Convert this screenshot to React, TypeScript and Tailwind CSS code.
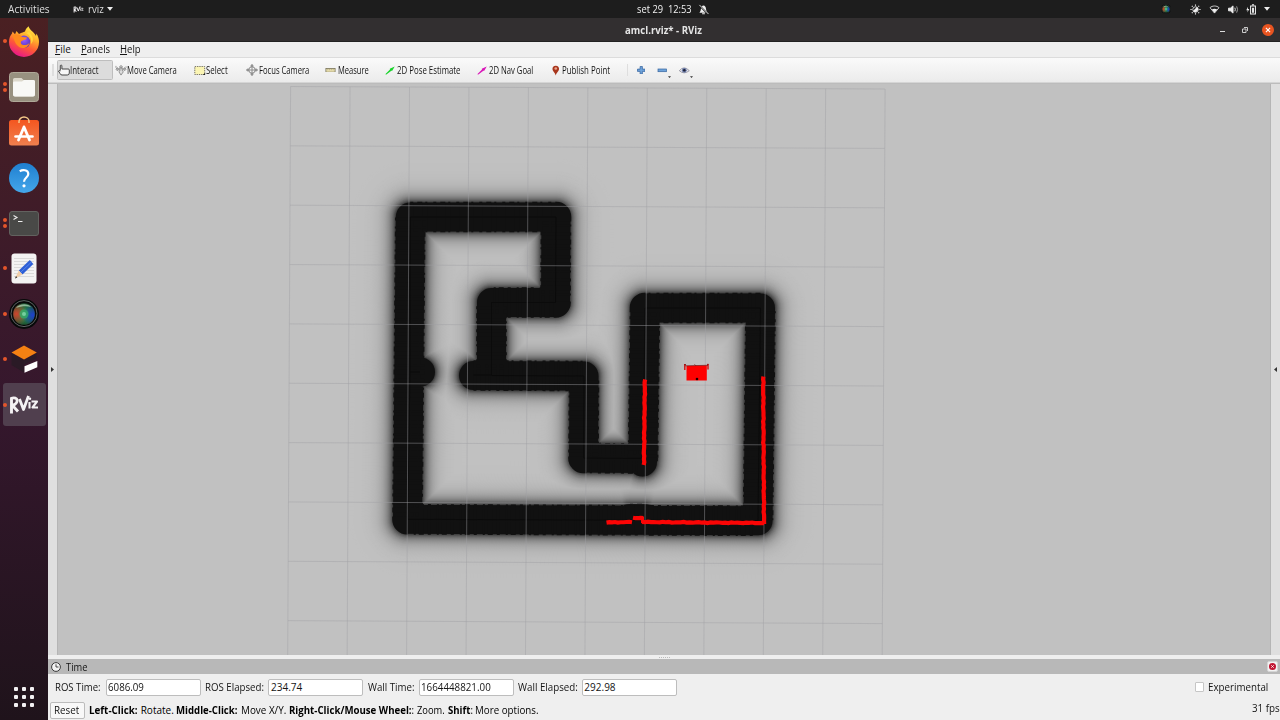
import { useLayoutEffect, useRef, useState } from "react";
import type { ReactNode } from "react";

/** Single line of text condensed or widened to an exact width. */
function Fit({ w, className = "", children }: { w: number; className?: string; children: ReactNode }) {
  const ref = useRef<HTMLSpanElement>(null);
  const [scale, setScale] = useState(1);
  useLayoutEffect(() => {
    if (ref.current) setScale(w / ref.current.offsetWidth);
  }, [w]);
  return (
    <span className={"block shrink-0 whitespace-nowrap " + className} style={{ width: w }}>
      <span ref={ref} className="inline-block origin-left" style={{ transform: `scaleX(${scale})` }}>
        {children}
      </span>
    </span>
  );
}

/* ---------- dock ---------- */

function Firefox() {
  return (
    <svg viewBox="0 0 30 31" className="h-[31px] w-[30px]">
      <defs>
        <linearGradient id="ff" x1="0.8" y1="0" x2="0.35" y2="1">
          <stop offset="0" stopColor="#fff24a" />
          <stop offset="0.35" stopColor="#ffb02b" />
          <stop offset="0.65" stopColor="#ff5a36" />
          <stop offset="1" stopColor="#e8168b" />
        </linearGradient>
        <radialGradient id="fp" cx="0.5" cy="0.35" r="0.7">
          <stop offset="0" stopColor="#9a5cff" />
          <stop offset="1" stopColor="#4b2fb5" />
        </radialGradient>
      </defs>
      <path d="M3.500 5.500L6 8.300 7.500 5 10 8C13 6.500 14.500 6.500 16 5.500 16.500 3 18.500 1.500 19.500 0.300 20.500 4 25 6 27 10L27.500 7.500C29.500 11 30 13.500 30 16A15 15 0 1 1 0 16C0 12 1.500 9 3 7.500Z" fill="url(#ff)" />
      <circle cx="15" cy="15.800" r="6.200" fill="url(#fp)" />
      <path d="M3 10C7 7 11 8.500 13 11L18 11.500C17.500 14 14 14 12.500 15 11 16.500 12 19 15 19 18 19.500 20 18 20.500 16 20 22 13 24 9 20 5 17 6 13 3 10Z" fill="#ff8a1e" />
      <path d="M17 7C21 9 23 13 22 18 25 15 24.500 10 20 6Z" fill="#ffd83d" />
    </svg>
  );
}

function Files() {
  return (
    <svg viewBox="0 0 30 30" className="size-[30px]">
      <rect x="0.500" y="0.500" width="29" height="29" rx="3" fill="#989180" stroke="#b0a999" />
      <path d="M4 7.500Q4 6 5.500 6H12.500L14.500 8H24Q26 8 26 9.500V22.500Q26 24.500 24 24.500H6Q4 24.500 4 22.500Z" fill="#dcd8cc" />
      <path d="M4 10.500Q4 9.500 5.500 9.500H13L15 8H24.500Q26 8 26 9.500V22.500Q26 24.500 24 24.500H6Q4 24.500 4 22.500Z" fill="#f8f8f6" />
    </svg>
  );
}

function Software() {
  return (
    <svg viewBox="0 0 30 30" className="mb-[2px] size-[30px]">
      <defs>
        <linearGradient id="sw" x2="0" y2="1">
          <stop stopColor="#f4561f" />
          <stop offset="1" stopColor="#f0804f" />
        </linearGradient>
      </defs>
      <rect y="4" width="30" height="25.500" rx="2.500" fill="url(#sw)" />
      <path d="M10 7V5.500A5 4.500 0 0 1 20 5.500V7" fill="none" stroke="#f6c98a" strokeWidth="1.500" />
      <path d="M15 11L9.500 24M15 11L20.500 24" stroke="#fff" strokeWidth="2.800" strokeLinecap="round" />
      <path d="M6.500 20.500H23.500" stroke="#fff" strokeWidth="2.600" strokeLinecap="round" />
    </svg>
  );
}

function Help() {
  return (
    <svg viewBox="0 0 30 30" className="size-[30px]">
      <defs>
        <linearGradient id="hp" x2="0" y2="1">
          <stop stopColor="#1f7fd0" />
          <stop offset="1" stopColor="#45a7ea" />
        </linearGradient>
      </defs>
      <circle cx="15" cy="15" r="15" fill="url(#hp)" />
      <path d="M10.800 8.300C13 6.600 19.300 6.300 19.300 11 19.300 14.500 15 14.500 15 18.800" fill="none" stroke="#fff" strokeWidth="2.200" />
      <circle cx="15" cy="22.800" r="1.600" fill="#fff" />
    </svg>
  );
}

function Terminal() {
  return (
    <svg viewBox="0 0 30 25" className="h-[25px] w-[30px]">
      <rect x="0.500" y="0.500" width="29" height="24" rx="2.500" fill="#494947" stroke="#62625f" />
      <path d="M4.500 4.500L8 6.500 4.500 8.500M9 10.500H13.500" fill="none" stroke="#eee" strokeWidth="1.100" />
    </svg>
  );
}

function Editor() {
  return (
    <svg viewBox="0 0 26 31" className="h-[31px] w-[26px]">
      <rect x="0.500" y="0.500" width="25" height="30" rx="3" fill="#f3f3f2" />
      <path d="M3 5.500H23M3 8.500H23M3 11.500H23M3 14.500H23M3 17.500H23M3 20.500H23M3 23.500H23" stroke="#cfcfcf" strokeWidth="0.700" />
      <path d="M18.800 7L22.300 11 11.500 21.500 7.800 17.500Z" fill="#2d5fd6" />
      <path d="M20.500 9L9.500 19.500" stroke="#5584ea" strokeWidth="1" />
      <path d="M7.800 17.500L11.500 21.500 4 25.500Z" fill="#f1cfaa" />
      <path d="M5 23L6.300 24.500 4 25.500Z" fill="#333" />
    </svg>
  );
}

function Lens({ id, className }: { id: string; className: string }) {
  return (
    <svg viewBox="0 0 30 30" className={className}>
      <defs>
        <radialGradient id={id + "r"} cx="0.15" cy="0.500" r="0.550">
          <stop stopColor="#d0432c" />
          <stop offset="1" stopColor="#d0432c" stopOpacity="0" />
        </radialGradient>
        <radialGradient id={id + "b"} cx="0.900" cy="0.550" r="0.500">
          <stop stopColor="#1d3fd0" />
          <stop offset="1" stopColor="#1d3fd0" stopOpacity="0" />
        </radialGradient>
        <radialGradient id={id + "g"} cx="0.500" cy="0.500" r="0.550">
          <stop stopColor="#37c070" />
          <stop offset="0.500" stopColor="#1d7a43" />
          <stop offset="1" stopColor="#20482c" />
        </radialGradient>
      </defs>
      <circle cx="15" cy="15" r="15" fill="#070909" />
      <circle cx="15" cy="14.600" r="13" fill="none" stroke="#666b6b" strokeWidth="0.900" />
      <circle cx="15" cy="15" r="10.800" fill={`url(#${id}g)`} />
      <circle cx="15" cy="15" r="10.800" fill={`url(#${id}r)`} />
      <circle cx="15" cy="15" r="10.800" fill={`url(#${id}b)`} />
      <path d="M7 9C10 4.500 19 4 22 8 18 6.500 12 7 7 9Z" fill="#b8dcc0" opacity="0.700" />
      <circle cx="15" cy="15" r="4.500" fill="#2fae68" opacity="0.800" />
      <circle cx="15" cy="15" r="2" fill="#8fe0b5" opacity="0.700" />
    </svg>
  );
}

function Gazebo() {
  return (
    <svg viewBox="0 0 30 30" className="size-[30px]">
      <path d="M2.500 14V9L15 16V28.500L2.500 21Z" fill="#2a1a26" />
      <path d="M15 16L27.500 9V14L15 21Z" fill="#2c1b28" />
      <path d="M15 1.500L27.800 8.600 15 15.500 2.500 8.600Z" fill="#f58113" />
      <path d="M15.500 22.300L28.300 17V23.300L15.500 28.800Z" fill="#fff" />
    </svg>
  );
}

function RvizMark({ className }: { className: string }) {
  return (
    <svg viewBox="0 0 30 20" className={className} fill="none" stroke="#f4f2f4" strokeLinejoin="round">
      <path d="M2.500 3V18.500M1.500 3.500C10 0.500 10 8.500 3.500 10.500L9 16.500" strokeWidth="2.900" />
      <path d="M10.500 4L14.500 14.500 19.500 1" strokeWidth="2.800" />
      <path d="M20.500 7V13.500M22.500 6.500H28L23.500 12.500H29" strokeWidth="2.100" />
      <circle cx="21" cy="3.800" r="1.200" fill="#f4f2f4" stroke="none" />
    </svg>
  );
}

function DockItem({ dots = 0, active = false, children }: { dots?: number; active?: boolean; children: ReactNode }) {
  return (
    <div className="flex h-[45.400px] w-full shrink-0 items-center">
      <div className={"ml-[2.500px] flex h-[43px] w-[43px] items-center rounded-[3px] " + (active ? "bg-[#503f4e]" : "")}>
        <div className="flex w-[4px] shrink-0 flex-col items-center gap-[2px]">
          {Array.from({ length: dots }, (_, i) => (
            <i key={i} className="size-[4px] rounded-full bg-[#e4552b]" />
          ))}
        </div>
        <div className="ml-[2.500px] flex w-[30px] shrink-0 items-center justify-center">{children}</div>
      </div>
    </div>
  );
}

function Dock() {
  return (
    <aside className="flex w-[48px] shrink-0 flex-col bg-linear-to-b from-[#4a2022] via-[#35172d] via-55% to-[#1f131b] pt-[0.800px]">
      <DockItem dots={1}><Firefox /></DockItem>
      <DockItem dots={2}><Files /></DockItem>
      <DockItem><Software /></DockItem>
      <DockItem><Help /></DockItem>
      <DockItem dots={2}><Terminal /></DockItem>
      <DockItem dots={1}><Editor /></DockItem>
      <DockItem dots={1}><Lens id="dl" className="size-[30px]" /></DockItem>
      <DockItem dots={1}><Gazebo /></DockItem>
      <DockItem dots={1} active><RvizMark className="h-[20px] w-[30px]" /></DockItem>
      <div className="mt-auto mb-[13px] ml-[14px] grid w-[20px] grid-cols-3 gap-[4px]">
        {Array.from({ length: 9 }, (_, i) => (
          <i key={i} className="size-[4px] rounded-[1px] bg-[#f2f0f2]" />
        ))}
      </div>
    </aside>
  );
}

/* ---------- desktop top bar ---------- */

function TopBar() {
  return (
    <header className="flex h-[18px] shrink-0 items-center bg-[#1d1d1d] text-[10px] text-[#dedede]">
      <Fit w={41.500} className="ml-[8px]">Activities</Fit>
      <RvizMark className="ml-[23px] h-[7px] w-[11px] shrink-0" />
      <Fit w={15.500} className="ml-[4px]">rviz</Fit>
      <svg viewBox="0 0 6 4" className="ml-[4px] h-[4px] w-[6px] shrink-0"><path d="M0 0H6L3 3.700Z" fill="#eee" /></svg>
      <Fit w={55} className="ml-[523.500px] text-[#f0f0f0]">set 29&nbsp; 12:53</Fit>
      <svg viewBox="0 0 12 12" className="ml-[6px] size-[11px] shrink-0">
        <path d="M1.500 9.500C3.500 8 3 4 4 3 5 1.200 7 1.200 8 3 9 4 8.500 8 10.500 9.500ZM4.500 10.200H7.500V11.300H4.500Z" fill="#eee" />
        <path d="M1 1L11 11" stroke="#1d1d1d" strokeWidth="1.800" />
        <path d="M1.500 1L11.500 11" stroke="#eee" strokeWidth="1" />
      </svg>
      <Lens id="tl" className="ml-auto size-[10px] shrink-0" />
      <svg viewBox="0 0 12 12" className="ml-[19px] size-[11px] shrink-0" stroke="#eee" strokeWidth="1.200">
        <circle cx="6" cy="6" r="3" fill="none" strokeWidth="0.900" />
        <path d="M3.300 7.500A3 3 0 1 0 7.500 3.300Z" fill="#eee" strokeWidth="0" />
        <path d="M6 0.500V1.800M6 10.200V11.500M0.500 6H1.800M10.200 6H11.500M2 2L2.900 2.900M9.100 9.100L10 10M2 10L2.900 9.100M9.100 2.900L10 2" />
      </svg>
      <svg viewBox="0 0 12 10" className="ml-[8px] h-[9px] w-[11px] shrink-0">
        <path d="M1 3C3.500 0.500 8.500 0.500 11 3L6 9Z" fill="none" stroke="#eee" strokeWidth="0.900" />
        <path d="M3 5C5 3.800 7 3.800 9 5L6 9Z" fill="#eee" />
      </svg>
      <svg viewBox="0 0 12 10" className="ml-[8px] h-[9px] w-[11px] shrink-0" fill="none" stroke="#aaa" strokeWidth="1">
        <path d="M0.500 3.500H2.500L5.500 1V9L2.500 6.500H0.500Z" fill="#eee" stroke="#eee" />
        <path d="M7.500 3Q8.500 5 7.500 7" stroke="#eee" /><path d="M9.500 1.500Q11.500 5 9.500 8.500" />
      </svg>
      <svg viewBox="0 0 12 12" className="ml-[7px] size-[11px] shrink-0">
        <path d="M2.200 3L0.300 6.700H1.900L1.500 9.300 3.600 5.500H2.100Z" fill="#eee" />
        <path d="M5 2.300H10.300V11H5ZM6.500 0.900H8.800" fill="none" stroke="#eee" strokeWidth="1.100" />
        <path d="M6.600 4H8.700V9.500H6.600Z" fill="#eee" />
      </svg>
      <svg viewBox="0 0 6 4" className="mr-[10px] ml-[7px] h-[4px] w-[6px] shrink-0"><path d="M0 0H6L3 3.700Z" fill="#eee" /></svg>
    </header>
  );
}

function TitleBar() {
  return (
    <div className="flex h-[24px] shrink-0 items-center border-b border-[#222] bg-[#322f30]">
      <Fit w={77} className="mt-[2px] ml-[577px] text-[10px] font-bold text-[#e4e4e4]">amcl.rviz* - RViz</Fit>
      <div className="mt-px ml-auto flex items-center pr-[6px]">
        <i className="mt-[3px] h-px w-[5px] bg-[#ddd]" />
        <svg viewBox="0 0 6 6" className="ml-[17px] size-[6px]" fill="none" stroke="#ccc" strokeWidth="1">
          <path d="M0.500 2H4V5.500H0.500ZM2 0.500H5.500V4" />
        </svg>
        <svg viewBox="0 0 12 12" className="ml-[14px] size-[12px]">
          <circle cx="6" cy="6" r="6" fill="#e95420" />
          <path d="M3.900 3.900L8.100 8.100M8.100 3.900L3.900 8.100" stroke="#fff" strokeWidth="1.100" />
        </svg>
      </div>
    </div>
  );
}

/* ---------- menu and tools ---------- */

function MenuBar() {
  return (
    <nav className="flex h-[16px] shrink-0 items-center border-b border-[#dcdcdc] bg-[#efefef] text-[10px] text-[#141414]">
      <Fit w={16} className="ml-[7px]"><span className="underline underline-offset-1">F</span>ile</Fit>
      <Fit w={29.500} className="ml-[10px]"><span className="underline underline-offset-1">P</span>anels</Fit>
      <Fit w={21} className="ml-[9.500px]"><span className="underline underline-offset-1">H</span>elp</Fit>
    </nav>
  );
}

function HandIcon() {
  return (
    <svg viewBox="0 0 12 12" className="h-[12px] w-[12px] shrink-0" fill="#f8f8f8" stroke="#333" strokeWidth="0.900" strokeLinejoin="round">
      <path d="M2.300 6.500V1.500Q3.100 0.500 3.900 1.500V5H10.300Q11.300 5 11.300 6V9Q11.300 11 9.300 11H4Q2.500 11 2 9.500L0.500 7Q1 5.800 2.300 7" />
    </svg>
  );
}

function MoveIcon() {
  return (
    <svg viewBox="0 0 12 12" className="h-[11px] w-[12px] shrink-0" fill="#ddd" stroke="#777" strokeWidth="0.800" strokeLinejoin="round">
      <path d="M6 0.500L7.800 2.200H6.600V4H10V2.800L11.500 4.600 10 6.200V5.200H7L8.500 7.500 6 11 3.800 7.500 5.200 5.200H2V6.200L0.500 4.600 2 2.800V4H5.300V2.200H4.200Z" />
      <path d="M0.500 1V3M11.500 1.500V3" />
    </svg>
  );
}

function FocusIcon() {
  return (
    <svg viewBox="0 0 12 12" className="size-[12px] shrink-0" fill="none" stroke="#858585" strokeWidth="0.900">
      <circle cx="6" cy="6" r="3.200" />
      <path d="M6 0.500V11.500M0.500 6H11.500M6 0.500L4.700 2.200H7.300ZM6 11.500L4.700 9.800H7.300ZM0.500 6L2.200 4.700V7.300ZM11.500 6L9.800 4.700V7.300Z" />
    </svg>
  );
}

function ArrowIcon({ color }: { color: string }) {
  return (
    <svg viewBox="0 0 11 9" className="h-[9px] w-[10px] shrink-0">
      <path d="M0.300 8.500L5.500 3.400 5.300 2.600 10.700 0.200 8 4.800 7 4.700 1.500 9Z" fill={color} />
    </svg>
  );
}

function Tools() {
  return (
    <div className="flex h-[24px] shrink-0 items-center bg-linear-to-b from-[#fafafa] to-[#ebebeb] text-[10px] text-[#141414]">
      <i className="ml-[3.500px] h-[12px] w-[2px] border-x border-[#dedede]" />
      <div className="ml-[3.500px] flex h-[20px] w-[56px] items-center rounded-[1.500px] border border-[#bebebe] bg-[#dcdcdc]">
        <div className="ml-[-0.500px] flex items-center"><HandIcon /><Fit w={28.500} className="ml-[0.700px]">Interact</Fit></div>
      </div>
      <div className="ml-[2px] flex w-[80px] items-center"><MoveIcon /><Fit w={50}>Move Camera</Fit></div>
      <div className="ml-[-1.500px] flex w-[52.500px] items-center">
        <svg viewBox="0 0 12 10" className="mr-[0.500px] ml-[0.500px] h-[9px] w-[11.500px] shrink-0">
          <rect x="0.500" y="0.500" width="11" height="9" fill="#fbf5b3" stroke="#55534a" strokeWidth="0.900" strokeDasharray="1.500 1" />
          <path d="M12 10H9.500L12 7.500Z" fill="#222" />
        </svg>
        <Fit w={22}>Select</Fit>
      </div>
      <div className="flex w-[79px] items-center"><FocusIcon /><Fit w={50.500} className="ml-px">Focus Camera</Fit></div>
      <div className="flex w-[60px] items-center">
        <svg viewBox="0 0 11 5" className="mr-[1.500px] h-[4.500px] w-[11px] shrink-0">
          <rect x="0.400" y="0.400" width="10.200" height="4.200" fill="#e9dfae" stroke="#6b6750" strokeWidth="0.800" />
          <path d="M2.500 2.500V1M4.500 2.500V1M6.500 2.500V1M8.500 2.500V1" stroke="#8a8565" strokeWidth="0.500" />
        </svg>
        <Fit w={31}>Measure</Fit>
      </div>
      <div className="flex w-[92px] items-center"><ArrowIcon color="#19d42b" /><Fit w={63.500} className="ml-[2px]">2D Pose Estimate</Fit></div>
      <div className="flex w-[75px] items-center"><ArrowIcon color="#d915b8" /><Fit w={44.500} className="ml-[2px]">2D Nav Goal</Fit></div>
      <div className="flex w-[72px] items-center">
        <svg viewBox="0 0 8 11" className="mr-[2.500px] h-[11px] w-[7.500px] shrink-0">
          <path d="M4 0.300C6.500 0.300 7.500 2 7.500 3.800 7.500 6 4.700 7.500 4 10.800 3.300 7.500 0.500 6 0.500 3.800 0.500 2 1.500 0.300 4 0.300Z" fill="#a8361c" />
          <circle cx="4" cy="3.300" r="1.400" fill="#e9a58e" />
        </svg>
        <Fit w={48}>Publish Point</Fit>
      </div>
      <i className="ml-[3px] h-[12px] w-px bg-[#dedede]" />
      <svg viewBox="0 0 9 9" className="ml-[8.500px] size-[8.500px]">
        <path d="M3.300 0.500H5.700V3.300H8.500V5.700H5.700V8.500H3.300V5.700H0.500V3.300H3.300Z" fill="#6ea3db" stroke="#37659f" strokeWidth="0.800" />
      </svg>
      <svg viewBox="0 0 14 15" className="ml-[12px] h-[15px] w-[14px]">
        <rect x="1" y="6" width="8.500" height="2.700" fill="#6ea3db" stroke="#37659f" strokeWidth="0.700" />
        <path d="M11 13.300H14L12.500 15Z" fill="#333" />
      </svg>
      <svg viewBox="0 0 14 15" className="ml-[8px] h-[15px] w-[14px]">
        <path d="M0.300 7.700Q5 2 10.300 7.700 5 12 0.300 7.700Z" fill="#e6e6ee" stroke="#8a8a98" strokeWidth="0.800" />
        <circle cx="5.300" cy="7.300" r="2.400" fill="#6b7ba8" /><circle cx="5.300" cy="7.300" r="1.200" fill="#1b1f33" />
        <path d="M11 13.300H14L12.500 15Z" fill="#333" />
      </svg>
    </div>
  );
}

/* ---------- 3D view: cost map, grid, laser scan ---------- */

const OUTLINE =
  "M410.300 217L556 217 555.500 302.500 491.500 302.500 491.500 375M473.500 375.500L584 376 583.500 458 643 458.500 645 308 760.500 308 758 520.800 407.500 519.300 410.300 217M410 372L420.500 372M630 518.500L644 518.500M642.500 458L642.500 462";
const CORE =
  "M420 372H410L410.300 217 556 217 555.500 302.500 491.500 302.500 491.500 375H473.500M491.500 375.500L584 376 583.500 458 643 458.500 645 308 760.500 308 758 520.800 407.500 519.300 410 372";
const HALO = Array.from({ length: 44 }, (_, i) => 44 - i);

function halo(d: number) {
  const v = Math.round(193 - 158 * Math.exp(-d / 7));
  return `rgb(${v},${v},${v})`;
}

function rough(x1: number, y1: number, x2: number, y2: number, seed: number) {
  const n = Math.max(2, Math.round(Math.hypot(x2 - x1, y2 - y1) / 3));
  const vertical = Math.abs(y2 - y1) > Math.abs(x2 - x1);
  let d = "";
  for (let i = 0; i <= n; i++) {
    const j = Math.sin(i * 2.7 + seed) * 0.25 + Math.sin(i * 1.1 + seed * 3) * 0.2;
    const x = x1 + ((x2 - x1) * i) / n + (vertical ? j : 0);
    const y = y1 + ((y2 - y1) * i) / n + (vertical ? 0 : j);
    d += `${i ? "L" : "M"}${x.toFixed(2)} ${y.toFixed(2)}`;
  }
  return d;
}

const SCAN = [
  rough(644.900, 379.500, 643.900, 465, 1),
  rough(763.200, 376.500, 764, 524, 2),
  rough(606.500, 522.500, 632, 522, 3),
  rough(633, 518, 643.500, 518, 4),
  rough(642, 522, 764, 523, 5),
].join(" ");

function MapView() {
  return (
    <svg viewBox="58 84 1212 571" className="block h-[571px] w-[1212px] bg-[#c1c1c1]">
      <defs>
        <filter id="soft" filterUnits="userSpaceOnUse" x="340" y="150" width="490" height="440" colorInterpolationFilters="sRGB">
          <feGaussianBlur stdDeviation="0.500" />
        </filter>
      </defs>
      <g filter="url(#soft)" fill="none" strokeLinejoin="round" strokeLinecap="round">
        {HALO.map((d) => (
          <path key={d} d={OUTLINE} stroke={halo(d)} strokeWidth={28 + 2 * d} />
        ))}
        <path d={OUTLINE} stroke="#111111" strokeWidth="29" />
        <path d={OUTLINE} stroke="#111111" strokeWidth="30.600" strokeDasharray="3 4 5 3 2 6" strokeLinecap="butt" />
      </g>
      <path d={CORE} fill="none" stroke="#0b0b0b" strokeWidth="1" />
      <g stroke="#a0a0a4" strokeOpacity="0.500" strokeWidth="0.900">
        {Array.from({ length: 11 }, (_, i) => (
          <line key={"v" + i} x1={290.600 + i * 59.450} y1={86.500 + i * 0.250} x2={287.700 + i * 59.450} y2="656" />
        ))}
        {Array.from({ length: 10 }, (_, i) => (
          <line key={"h" + i} x1={290.600 - i * 0.300} y1={86.500 + i * 59.350} x2={885 - i * 0.300} y2={89 + i * 59.400} />
        ))}
      </g>
      <path d={SCAN} fill="none" stroke="#fb0505" strokeWidth="4.200" strokeLinejoin="miter" />
      <path d="M642.500 517V523" stroke="#fb0505" strokeWidth="3" />
      <path d="M686.500 366L706.800 365.500V380.500H686.500Z" fill="#fe0000" />
      <path d="M684.800 364V370M708 364V369.500" stroke="#d01010" strokeWidth="1.400" />
      <path d="M684.300 364.500H686M684.800 365.800L708 365.300M707 364.300H708.500M694.500 364.300L696 365.800" stroke="#7a0808" strokeWidth="0.700" />
      <circle cx="697" cy="379" r="1.300" fill="#160000" />
    </svg>
  );
}

function Side({ left = false }: { left?: boolean }) {
  return (
    <div className={"flex w-[10px] shrink-0 items-center justify-center border-[#b5b5b5] bg-[#dfdfdf] " + (left ? "border-r" : "border-l")}>
      <svg viewBox="0 0 3 5" className="h-[5px] w-[3px]">
        <path d={left ? "M0 0L3 2.500 0 5Z" : "M3 0L0 2.500 3 5Z"} fill="#333" />
      </svg>
    </div>
  );
}

/* ---------- time panel ---------- */

function Field({ label, w, value, vw }: { label: string; w: number; value: string; vw: number }) {
  return (
    <div className="flex shrink-0 items-center">
      <Fit w={w}>{label}</Fit>
      <div className="ml-[4.500px] flex h-[17px] w-[95px] items-center rounded-[2px] border border-[#bdbdbd] bg-white pl-[1.500px]">
        <Fit w={vw}>{value}</Fit>
      </div>
    </div>
  );
}

function TimePanel() {
  return (
    <section className="flex h-[65px] shrink-0 flex-col bg-[#efefef] text-[10px] text-[#141414]">
      <div className="flex h-[4px] shrink-0 items-center justify-center gap-px">
        {[0, 1, 2, 3, 4, 5].map((i) => <i key={i} className="size-px bg-[#bbb]" />)}
      </div>
      <div className="flex h-[15px] shrink-0 items-center bg-[#b8b8b8]">
        <svg viewBox="0 0 10 10" className="mt-px ml-[3px] size-[10px]">
          <circle cx="5" cy="5" r="4.400" fill="#f2f2f2" stroke="#3a3a3a" strokeWidth="1" />
          <path d="M5 2.300V5H7.500" fill="none" stroke="#333" strokeWidth="0.900" />
        </svg>
        <Fit w={21.500} className="mt-[2px] ml-[4.500px]">Time</Fit>
        <div className="mr-[2px] mb-px ml-auto flex size-[11px] items-center justify-center rounded-[2px] border border-[#d5d5d5] bg-[#f3f3f3]">
          <svg viewBox="0 0 8 8" className="size-[7px] shrink-0">
            <circle cx="4" cy="4" r="4" fill="#c11532" />
            <path d="M2.600 2.600L5.400 5.400M5.400 2.600L2.600 5.400" stroke="#fff" strokeWidth="1" />
          </svg>
        </div>
      </div>
      <div className="flex h-[26px] shrink-0 items-center gap-[4.200px] pl-[7.300px]">
        <Field label="ROS Time:" w={46} value="6086.09" vw={36} />
        <Field label="ROS Elapsed:" w={59} value="234.74" vw={31} />
        <Field label="Wall Time:" w={46.500} value="1664448821.00" vw={69.500} />
        <Field label="Wall Elapsed:" w={59.500} value="292.98" vw={31} />
        <i className="ml-auto size-[9.500px] rounded-[1px] border border-[#c6c6c6] bg-white" />
        <Fit w={60.500} className="mr-[11.500px] -ml-[0.500px]">Experimental</Fit>
      </div>
      <div className="flex h-[20px] shrink-0 items-center">
        <div className="ml-[1.500px] flex h-[17px] w-[35px] items-center justify-center rounded-[2px] border border-[#bcbcbc] bg-[#f8f8f8] pt-px">
          <Fit w={25.500}>Reset</Fit>
        </div>
        <div className="mt-px ml-[4.500px] flex gap-[2.700px] text-black">
          <Fit w={49} className="font-bold">Left-Click:</Fit>
          <Fit w={33}>Rotate.</Fit>
          <Fit w={61.500} className="font-bold">Middle-Click:</Fit>
          <Fit w={45.500}>Move X/Y.</Fit>
          <Fit w={125.500}><b>Right-Click/Mouse Wheel:</b>:</Fit>
          <Fit w={28}>Zoom.</Fit>
          <Fit w={25}><b>Shift</b>:</Fit>
          <Fit w={63.500}>More options.</Fit>
        </div>
        <Fit w={27.500} className="mr-[0.500px] mb-[3px] ml-auto">31 fps</Fit>
      </div>
    </section>
  );
}

export default function App() {
  return (
    <div className="flex h-[720px] w-[1280px] flex-col overflow-hidden font-['Open_Sans','Noto_Sans',sans-serif] leading-[13px] font-medium">
      <TopBar />
      <div className="flex min-h-0 flex-1">
        <Dock />
        <main className="flex w-[1232px] shrink-0 flex-col bg-[#efefef]">
          <TitleBar />
          <MenuBar />
          <Tools />
          <div className="h-[2px] shrink-0 border-t border-[#d5d5d5] bg-[#bcbcbc]" />
          <div className="flex h-[571px] shrink-0">
            <Side left />
            <MapView />
            <Side />
          </div>
          <TimePanel />
        </main>
      </div>
    </div>
  );
}
